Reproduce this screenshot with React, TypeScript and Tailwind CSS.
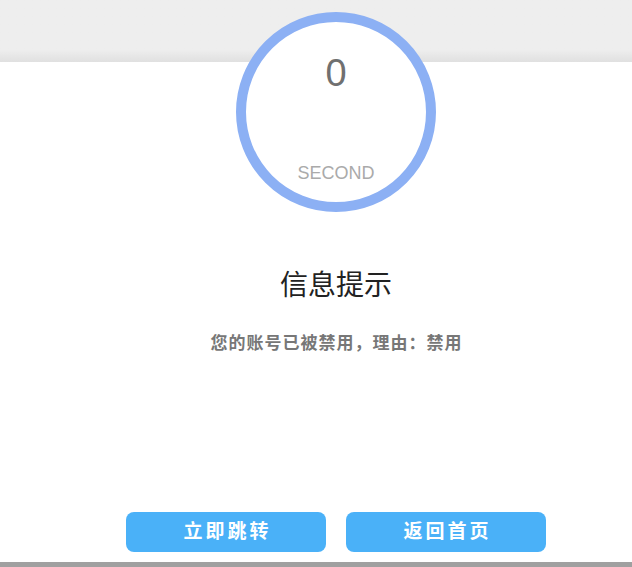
export default function App() {
  return (
    <div className="relative h-[567px] w-[632px] overflow-hidden bg-white font-['Liberation_Sans','Noto_Sans_CJK_SC',sans-serif]">
      {/* top band */}
      <div className="h-[62px] bg-gradient-to-b from-[#eeeeee] from-80% to-[#e0e0e0]" />

      {/* content */}
      <div className="flex h-[500px] flex-col items-center pl-[40px]">
        {/* countdown ring overlaps the band */}
        <div className="-mt-[50px] flex h-[200px] w-[200px] flex-col items-center rounded-full border-[10px] border-[#8cb0f4] bg-white">
          <div className="mt-[29px] text-[38px] leading-[44px] text-[#707070]">0</div>
          <div className="mt-[68px] text-[18px] leading-[20px] text-[#aaaaaa]">SECOND</div>
        </div>

        <h1 className="mt-[57px] text-[28px] leading-[34px] text-[#222222]">信息提示</h1>
        <p className="mt-[30px] pl-[1px] text-[17px] font-semibold leading-[22px] tracking-[1px] text-[#777777]">
          您的账号已被禁用，理由：禁用
        </p>

        <div className="mt-auto mb-[10px] flex gap-[20px]">
          <button className="h-[40px] w-[200px] rounded-[8px] bg-[#4ab1f8] pl-[3px] text-[19px] font-semibold tracking-[3px] text-white">
            立即跳转
          </button>
          <button className="h-[40px] w-[200px] rounded-[8px] bg-[#4ab1f8] pl-[3px] text-[19px] font-semibold tracking-[3px] text-white">
            返回首页
          </button>
        </div>
      </div>

      {/* bottom bar */}
      <div className="h-[5px] bg-[#a0a0a0]" />
    </div>
  );
}
